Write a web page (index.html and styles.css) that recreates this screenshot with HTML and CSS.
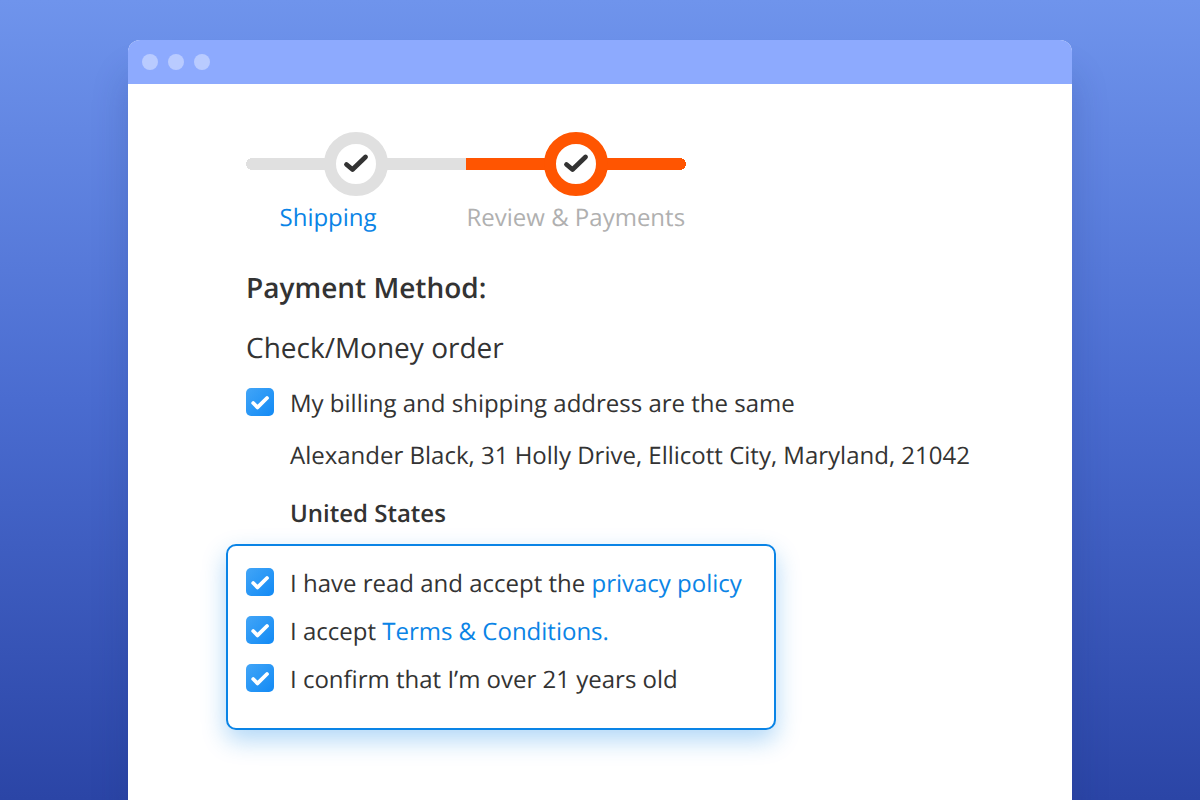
FILE: index.html
```html
<!DOCTYPE html>
<html lang="en">
<head>
<meta charset="utf-8">
<title>Checkout</title>
<link rel="stylesheet" href="styles.css">
</head>
<body>
<svg class="defs" width="0" height="0" aria-hidden="true">
  <defs>
    <linearGradient id="cb" x1="0" y1="0" x2="1" y2="1">
      <stop offset="0" stop-color="#42a5f7"/>
      <stop offset="1" stop-color="#128af5"/>
    </linearGradient>
    <symbol id="box" viewBox="0 0 28 28">
      <rect width="28" height="28" rx="5" fill="url(#cb)"/>
      <path d="M7.2 15l4.3 4.4L21 10" fill="none" stroke="#fff" stroke-width="3.8" stroke-linecap="round" stroke-linejoin="round"/>
    </symbol>
    <symbol id="tick" viewBox="0 0 40 40">
      <path d="M10.5 20.5l6 5L29.5 13" fill="none" stroke="#333" stroke-width="4.8" stroke-linecap="round" stroke-linejoin="round"/>
    </symbol>
  </defs>
</svg>
<main class="window">
  <header class="titlebar">
    <span class="dot"></span><span class="dot"></span><span class="dot"></span>
  </header>
  <section class="content">
    <div class="stepper">
      <div class="step step-done">
        <div class="track">
          <span class="ring"><svg class="tick"><use href="#tick"/></svg></span>
        </div>
        <div class="label label-link">Shipping</div>
      </div>
      <div class="step step-active">
        <div class="track">
          <span class="ring"><svg class="tick"><use href="#tick"/></svg></span>
        </div>
        <div class="label label-muted">Review &amp; Payments</div>
      </div>
    </div>

    <h2 class="method-title">Payment Method:</h2>
    <p class="method">Check/Money order</p>

    <div class="check-row">
      <svg class="box"><use href="#box"/></svg>
      <span>My billing and shipping address are the same</span>
    </div>
    <p class="address">Alexander Black, 31 Holly Drive, Ellicott City, Maryland, 21042</p>
    <p class="country">United States</p>

    <div class="agreements">
      <div class="check-row">
        <svg class="box"><use href="#box"/></svg>
        <span>I have read and accept the <a class="link">privacy policy</a></span>
      </div>
      <div class="check-row">
        <svg class="box"><use href="#box"/></svg>
        <span>I accept <a class="link">Terms &amp; Conditions.</a></span>
      </div>
      <div class="check-row">
        <svg class="box"><use href="#box"/></svg>
        <span>I confirm that I’m over 21 years old</span>
      </div>
    </div>
  </section>
</main>
</body>
</html>
```

FILE: styles.css
```css
* { box-sizing: border-box; }
html, body { height: 100%; }
body {
  margin: 0;
  height: 800px;
  overflow: hidden;
  padding: 40px 128px 0;
  background: linear-gradient(180deg, #6f94ec 0%, #4a6cd0 50%, #2b45a6 100%);
  font-family: "Open Sans", "Liberation Sans", sans-serif;
  color: #333;
  text-rendering: geometricPrecision;
}
.defs { position: absolute; }
.window {
  height: 760px;
  background: #fff;
  border-radius: 12px 12px 0 0;
  box-shadow: 0 36px 36px rgba(25, 45, 120, 0.22);
  overflow: hidden;
}
.titlebar {
  height: 44px;
  background: #8daafe;
  display: flex;
  align-items: center;
  gap: 10px;
  padding-left: 14px;
}
.dot {
  width: 16px;
  height: 16px;
  border-radius: 50%;
  background: #b9cbff;
}
.content { padding: 48px 0 0 118px; }

.stepper { display: flex; width: 440px; }
.step { width: 220px; }
.track {
  height: 64px;
  display: flex;
  align-items: center;
  justify-content: center;
}
.step-active .track {
  background:
    radial-gradient(circle 6px at calc(100% - 6px) 50%, #ff5501 98%, transparent 100%),
    linear-gradient(#ff5501, #ff5501) left center / calc(100% - 6px) 12px no-repeat;
}
.step-done .track {
  background:
    radial-gradient(circle 6px at 6px 50%, #e0e0e0 98%, transparent 100%),
    linear-gradient(#e0e0e0, #e0e0e0) right center / calc(100% - 6px) 12px no-repeat;
}
.ring {
  width: 64px;
  height: 64px;
  border-radius: 50%;
  border: 12px solid #e0e0e0;
  background: #fff;
  display: block;
}
.step-active .ring { border-color: #ff5501; }
.tick { display: block; width: 40px; height: 40px; }
.label {
  font-size: 24px;
  line-height: 32px;
  margin-top: 6px;
  white-space: nowrap;
}
.label-link { color: #0a84e6; padding-left: 33.5px; }
.label-muted { color: #b0b0b0; padding-left: 0.5px; }

.method-title {
  margin: 34px 0 0;
  font-size: 28px;
  line-height: 40px;
  font-weight: 600;
}
.method {
  margin: 20px 0 0;
  font-size: 28px;
  line-height: 40px;
}
.check-row {
  display: flex;
  align-items: center;
  gap: 16px;
  font-size: 24px;
  line-height: 32px;
  height: 32px;
  white-space: nowrap;
}
.box { width: 28px; height: 28px; flex: none; margin-bottom: 4px; }
.method + .check-row { margin-top: 20px; }
.address {
  margin: 20px 0 0 44px;
  font-size: 24px;
  line-height: 32px;
  white-space: nowrap;
}
.country {
  margin: 26px 0 0 44px;
  font-size: 24px;
  line-height: 32px;
  font-weight: 600;
}
.agreements {
  margin: 14px 0 0 -20px;
  width: 550px;
  height: 186px;
  border: 2px solid #0a84e6;
  border-radius: 10px;
  background: #fff;
  box-shadow: 0 10px 24px rgba(10, 132, 230, 0.32);
  padding: 22px 0 0 18px;
  display: flex;
  flex-direction: column;
  gap: 16px;
}
.link { color: #0a84e6; }
```
